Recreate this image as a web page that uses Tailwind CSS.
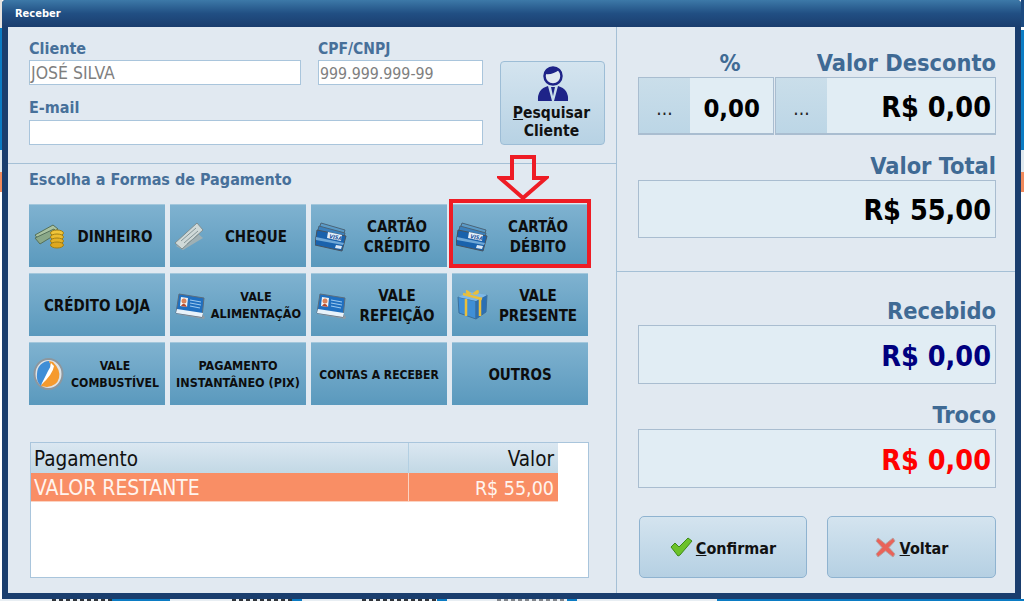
<!DOCTYPE html>
<html lang="en">
<head>
    <meta charset="UTF-8">
    <title>Receber</title>
    <script src="https://cdn.jsdelivr.net/npm/@tailwindcss/browser@4"></script>
</head>
<body class="relative w-[1024px] h-[601px] overflow-hidden bg-white font-['DejaVu_Sans_Condensed','DejaVu_Sans',sans-serif]">
    <svg class="hidden">
        <symbol id="card" viewBox="0 0 32 30">
            <path d="M6 1 L30 8 L26 21 L2 13Z" fill="#5b9bc8" stroke="#4a6478"/>
            <path d="M4 4 L30 11 L26 24 L1 16Z" fill="#3a7fbc" stroke="#4a6478"/>
            <path d="M2 8 L31 14 L27 29 L0 23Z" fill="#1a62ac" stroke="#47535f"/>
            <path d="M1 15 L29 21 L28 23 L1 18Z" fill="#6fa8d8"/>
            <path d="M13 10 L27 13 L26 19 L12 16Z" fill="#e6f1fa"/>
            <text x="14" y="16" font-size="5.500" font-weight="700" font-style="italic" fill="#17509a" transform="rotate(11 14 16)">VISA</text>
            <path d="M21 23 L27 24 L26 27 L20 26Z" fill="#dbe8f4"/>
        </symbol>
        <symbol id="idcard" viewBox="0 0 30 28">
            <path d="M1 21 L29 26 L30 24 L28 22Z" fill="#8f9aa3"/>
            <path d="M4 1 L29 5 L27 24 L1 20Z" fill="#1f6fc0" stroke="#5b6d7d"/>
            <path d="M2 16 L28 20 L27 24 L1 20Z" fill="#e8f2fa"/>
            <path d="M6 4 L13 5 L12 14 L5 13Z" fill="#f4f4f4"/>
            <circle cx="9" cy="8" r="2.500" fill="#d9825a"/>
            <path d="M6 13 Q9 8 12 14Z" fill="#b5482e"/>
            <path d="M15 7 L26 9 M15 10 L26 12 M15 13 L25 15" stroke="#9cc8ee" stroke-width="1.200"/>
        </symbol>
    </svg>

    <!-- janelas atras -->
    <div class="absolute left-0 top-0 w-[2px] h-[28px] bg-[#e8e4e0]"></div>
    <div class="absolute left-0 top-[28px] w-[2px] h-[122px] bg-[#0b7cc4]"></div>
    <div class="absolute left-0 top-[150px] w-[2px] h-[22px] bg-[#dfe8ee]"></div>
    <div class="absolute left-0 top-[172px] w-[2px] h-[20px] bg-[#f08a5c]"></div>
    <div class="absolute right-0 top-0 w-[3px] h-[27px] bg-[#1c4a80]"></div>
    <div class="absolute right-0 top-[30px] w-[3px] h-[120px] bg-[#0b7cc4]"></div>
    <div class="absolute right-0 top-[150px] w-[3px] h-[22px] bg-[#dfe8ee]"></div>
    <div class="absolute right-0 top-[172px] w-[3px] h-[20px] bg-[#f08a5c]"></div>
    <div class="absolute left-0 right-0 bottom-0 h-[2px] flex">
        <div class="w-[52px] bg-[#e8eef3]"></div><div class="w-[60px] bg-[repeating-linear-gradient(90deg,#30343a_0_4px,#e8eef3_4px_7px)]"></div><div class="w-[58px] bg-[#0b7cc4]"></div>
        <div class="w-[62px] bg-[#e8eef3]"></div><div class="w-[60px] bg-[repeating-linear-gradient(90deg,#30343a_0_4px,#e8eef3_4px_7px)]"></div><div class="w-[10px] bg-[#0b7cc4]"></div>
        <div class="w-[60px] bg-[#e8eef3]"></div><div class="w-[75px] bg-[repeating-linear-gradient(90deg,#30343a_0_4px,#e8eef3_4px_7px)]"></div><div class="w-[10px] bg-[#0b7cc4]"></div>
        <div class="w-[50px] bg-[#e8eef3]"></div><div class="w-[70px] bg-[repeating-linear-gradient(90deg,#80848a_0_4px,#e8eef3_4px_7px)]"></div><div class="w-[10px] bg-[#0b7cc4]"></div>
        <div class="w-[140px] bg-[#e8eef3]"></div><div class="w-[10px] bg-[#0b7cc4]"></div>
        <div class="flex-1 bg-[#0b7cc4]"></div>
    </div>

    <div class="absolute left-[2px] top-0 w-[1019px] h-[599px] flex flex-col rounded-t-[4px] bg-[#1a3e6e] px-[6px] pb-[6px]">
        <div class="-mx-[6px] h-[27px] shrink-0 rounded-t-[4px] bg-gradient-to-b from-[#3d79a8] via-[#214f83] to-[#1a3d6e] pl-[13px] pt-[7px] text-[11px] leading-[14px] font-bold text-white">Receber</div>

        <div class="flex-1 flex bg-[#e1e9f1]">
            <!-- esquerda -->
            <div class="w-[609px] shrink-0 flex flex-col border-r border-[#a5c0d6]">
                <div class="h-[137px] shrink-0 flex border-b border-[#a5c0d6] pl-[21px] pt-[12px]">
                    <div class="w-[454px] flex flex-col">
                        <div class="flex gap-[17px]">
                            <div class="w-[272px]">
                                <div class="mb-[2px] text-[16px] leading-[19px] font-bold text-[#47709a]">Cliente</div>
                                <div class="h-[25px] bg-white border border-[#a9c5dc] pl-[1px] text-[17.5px] leading-[25px] text-[#7f7f7f]">JOSÉ SILVA</div>
                            </div>
                            <div class="w-[165px]">
                                <div class="text-[15.5px] leading-[21px] font-bold text-[#47709a]">CPF/CNPJ</div>
                                <div class="h-[25px] bg-white border border-[#a9c5dc] pl-[1px] text-[15.8px] leading-[25px] text-[#7f7f7f]">999.999.999-99</div>
                            </div>
                        </div>
                        <div class="mt-[10px] text-[16px] leading-[25px] mb-0 font-bold text-[#47709a]">E-mail</div>
                        <div class="h-[25px] bg-white border border-[#a9c5dc]"></div>
                    </div>
                    <button class="ml-[17px] mt-[22px] w-[105px] h-[84px] rounded-[4px] border border-[#9dbdd6] bg-gradient-to-b from-[#d4e4ef] to-[#b7d2e4] flex flex-col items-center text-[15.5px] leading-[18px] font-bold text-[#111]">
                        <svg class="mt-[3px] w-[32px] h-[37px]" viewBox="0 0 32 37">
                            <circle cx="16" cy="11" r="8.500" fill="#e1e9f1" stroke="#1e2388" stroke-width="2.500"/>
                            <path d="M8 9 Q16 10 22 5 Q25 8 24.500 11 Q26 3 16 2 Q6 3 8 11Z" fill="#1e2388"/>
                            <path d="M1 36 Q0 24 11 21 L15 36Z M31 36 Q32 24 21 21 L17 36Z" fill="#1e2388"/>
                            <path d="M14 22 L18 22 L16 31Z" fill="#1e2388"/>
                        </svg>
                        <span class="mt-[2px] -ml-[2px]"><u>P</u>esquisar<br>Cliente</span>
                    </button>
                </div>

                <div class="relative flex-1 pl-[21px]">
                    <div class="pt-[6px] text-[16px] leading-[20px] font-bold text-[#47709a]">Escolha a Formas de Pagamento</div>

                    <div class="mt-[14px] grid grid-cols-[repeat(4,136px)] grid-rows-[repeat(3,63px)] gap-x-[5px] gap-y-[6px] font-bold text-[#0d0d0d] text-center">
                        <button class="relative pl-[36px] pt-[2px] bg-gradient-to-b from-[#7fb2d0] to-[#5a99bd] border-t border-[#a3c7dc] text-[15px] leading-[20px] font-bold">
                            <svg class="absolute left-[5px] top-[19px] w-[30px] h-[25px]" viewBox="0 0 30 25">
                                <path d="M1 11 L19 1 L24 5 L6 17Z" fill="#a9c2a0" stroke="#55705a"/>
                                <path d="M1 14 L20 5 L24 9 L6 20Z" fill="#8aa888" stroke="#55705a"/>
                                <ellipse cx="23" cy="9" rx="6.500" ry="3" fill="#f0c53a" stroke="#a27f16"/>
                                <ellipse cx="23" cy="13" rx="6.500" ry="3" fill="#ecbc2f" stroke="#a27f16"/>
                                <ellipse cx="23" cy="17" rx="6.500" ry="3" fill="#e6b327" stroke="#a27f16"/>
                                <ellipse cx="23" cy="21" rx="6.500" ry="3" fill="#dfa81f" stroke="#a27f16"/>
                            </svg>
                            DINHEIRO
                        </button>
                        <button class="relative pl-[36px] pt-[2px] bg-gradient-to-b from-[#7fb2d0] to-[#5a99bd] border-t border-[#a3c7dc] text-[15px] leading-[20px] font-bold">
                            <svg class="absolute left-[4px] top-[17px] w-[30px] h-[29px]" viewBox="0 0 30 29">
                                <path d="M2 24 L22 10 L29 16 L9 28Z" fill="#9fb0b4"/>
                                <path d="M1 21 L23 1 L29 8 L8 27Z" fill="#cfd9d8" stroke="#7f8f92"/>
                                <path d="M7 19 L22 6 M10 21 L24 9 M13 22 L25 12" stroke="#869698"/>
                            </svg>
                            CHEQUE
                        </button>
                        <button class="relative pl-[36px] pt-[2px] bg-gradient-to-b from-[#7fb2d0] to-[#5a99bd] border-t border-[#a3c7dc] text-[15px] leading-[20px] font-bold">
                            <svg class="absolute left-[4px] top-[17px] w-[32px] h-[30px]"><use href="#card"/></svg>
                            CARTÃO<br>CRÉDITO
                        </button>
                        <button class="relative pl-[36px] pt-[2px] bg-gradient-to-b from-[#7fb2d0] to-[#5a99bd] border-t border-[#a3c7dc] text-[15px] leading-[20px] font-bold">
                            <svg class="absolute left-[4px] top-[17px] w-[32px] h-[30px]"><use href="#card"/></svg>
                            CARTÃO<br>DÉBITO
                        </button>

                        <button class="pt-[2px] bg-gradient-to-b from-[#7fb2d0] to-[#5a99bd] border-t border-[#a3c7dc] text-[15px] leading-[20px] font-bold">CRÉDITO LOJA</button>
                        <button class="relative pl-[36px] bg-gradient-to-b from-[#7fb2d0] to-[#5a99bd] border-t border-[#a3c7dc] text-[12.5px] leading-[17px] font-bold">
                            <svg class="absolute left-[5px] top-[19px] w-[30px] h-[28px]"><use href="#idcard"/></svg>
                            VALE<br>ALIMENTAÇÃO
                        </button>
                        <button class="relative pl-[36px] pt-[2px] bg-gradient-to-b from-[#7fb2d0] to-[#5a99bd] border-t border-[#a3c7dc] text-[15px] leading-[20px] font-bold">
                            <svg class="absolute left-[5px] top-[19px] w-[30px] h-[28px]"><use href="#idcard"/></svg>
                            VALE<br>REFEIÇÃO
                        </button>
                        <button class="relative pl-[36px] pt-[2px] bg-gradient-to-b from-[#7fb2d0] to-[#5a99bd] border-t border-[#a3c7dc] text-[15px] leading-[20px] font-bold">
                            <svg class="absolute left-[4px] top-[14px] w-[32px] h-[32px]" viewBox="0 0 32 32">
                                <path d="M2 9 L20 13 L20 31 L3 25Z" fill="#3f8fd6" stroke="#3a6f9c"/>
                                <path d="M20 13 L31 7 L30 24 L20 31Z" fill="#2a6fb4" stroke="#3a6f9c"/>
                                <path d="M2 9 L14 4 L31 7 L20 13Z" fill="#7db8e8"/>
                                <path d="M10 11 L10 28 M24 10 L24 28 M7 6 L26 11" stroke="#e9bf3c" stroke-width="2.500" fill="none"/>
                                <path d="M16 6 Q9 -1 10 4 Q10 8 16 6 Q23 -1 23 4 Q22 8 16 6Z" fill="#e9bf3c"/>
                            </svg>
                            VALE<br>PRESENTE
                        </button>

                        <button class="relative pl-[36px] pt-[2px] bg-gradient-to-b from-[#7fb2d0] to-[#5a99bd] border-t border-[#a3c7dc] text-[12.2px] leading-[17px] font-bold">
                            <svg class="absolute left-[4px] top-[15px] w-[31px] h-[32px]" viewBox="0 0 31 32">
                                <ellipse cx="15.500" cy="16" rx="14" ry="15" fill="#dfe3e6" stroke="#8d979e" stroke-width="2"/>
                                <path d="M4 16 A12 13 0 0 1 16 3 Q20 10 14 17 L8 28 A12 13 0 0 1 4 16Z" fill="#3f8ed6"/>
                                <path d="M14 17 Q20 10 16 3 L20 4 Q28 12 26 20 Q24 28 14 29 L8 28Z" fill="#f59a2e"/>
                                <path d="M8 27 L15 13 Q18 9 18 5 L21 8 Q20 16 8 27Z" fill="#fff"/>
                            </svg>
                            VALE<br>COMBUSTÍVEL
                        </button>
                        <button class="bg-gradient-to-b from-[#7fb2d0] to-[#5a99bd] border-t border-[#a3c7dc] text-[12.5px] leading-[17px] font-bold">PAGAMENTO<br>INSTANTÂNEO (PIX)</button>
                        <button class="pt-[2px] bg-gradient-to-b from-[#7fb2d0] to-[#5a99bd] border-t border-[#a3c7dc] text-[12px] leading-[17px] font-bold">CONTAS A RECEBER</button>
                        <button class="pt-[2px] bg-gradient-to-b from-[#7fb2d0] to-[#5a99bd] border-t border-[#a3c7dc] text-[15px] leading-[20px] font-bold">OUTROS</button>
                    </div>

                    <!-- destaque vermelho por cima do botao -->
                    <div class="absolute left-[441px] top-[35px] w-[142px] h-[69px] border-[4px] border-[#ee1c25]"></div>
                    <svg class="absolute left-[489px] top-[-9px] w-[52px] h-[45px]" viewBox="0 0 52 45">
                        <path d="M15 2 L37 2 L37 23 L49 23 L26 43 L3 23 L15 23Z" fill="none" stroke="#ee1c25" stroke-width="4"/>
                    </svg>

                    <div class="mt-[37px] ml-[1px] w-[559px] h-[136px] bg-white border border-[#a9c5dc]">
                        <div class="w-[527px] h-[30px] flex bg-gradient-to-b from-[#dbe7f1] to-[#c2d8e5] text-[20.5px] leading-[32px] text-[#111]">
                            <div class="w-[378px] pl-[3px] border-r border-[#b3cfe2]">Pagamento</div>
                            <div class="flex-1 pr-[4px] text-right">Valor</div>
                        </div>
                        <div class="w-[527px] h-[29px] flex bg-[#f98e65] leading-[31px] text-[#fff4ee] border-b border-[#fbd3c2]">
                            <div class="w-[378px] pl-[3px] border-r border-[#fbd3c2] text-[21px]">VALOR RESTANTE</div>
                            <div class="flex-1 pr-[4px] text-right text-[19.5px]">R$ 55,00</div>
                        </div>
                    </div>
                </div>
            </div>

            <!-- direita -->
            <div class="flex-1 flex flex-col">
                <div class="h-[245px] shrink-0 border-b border-[#a5c0d6] pl-[21px] pr-[19px] pt-[21px]">
                    <div class="flex h-[29px] text-[23.4px] leading-[31px] font-bold text-[#3f6a94]">
                        <div class="w-[136px] pl-[48px] text-center">%</div>
                        <div class="flex-1 text-right">Valor Desconto</div>
                    </div>
                    <div class="flex gap-[1px]">
                        <div class="w-[136px] h-[58px] flex border border-[#a9bdd0] border-b-2 bg-[#e1edf4]">
                            <div class="w-[51px] bg-gradient-to-b from-[#cadeea] to-[#bcd6e6] flex items-center justify-center text-[19px] pt-[6px] text-[#222]">...</div>
                            <div class="flex-1 pr-[13px] text-right text-[25.5px] leading-[60px] font-bold text-black">0,00</div>
                        </div>
                        <div class="flex-1 h-[58px] flex border border-[#a9bdd0] border-b-2 bg-[#e1edf4]">
                            <div class="w-[51px] bg-gradient-to-b from-[#cadeea] to-[#bcd6e6] flex items-center justify-center text-[19px] pt-[6px] text-[#222]">...</div>
                            <div class="flex-1 pr-[4px] text-right text-[28.5px] leading-[60px] font-bold text-black">R$ 0,00</div>
                        </div>
                    </div>
                    <div class="mt-[18px] text-right text-[23.4px] leading-[27px] font-bold text-[#3f6a94]">Valor Total</div>
                    <div class="h-[58px] bg-[#e1edf4] border border-[#a9bdd0] pr-[4px] text-right text-[28.5px] leading-[60px] font-bold text-black">R$ 55,00</div>
                </div>
                <div class="flex-1 pl-[21px] pr-[19px] pt-[25px]">
                    <div class="text-right text-[23.4px] leading-[28px] font-bold text-[#3f6a94]">Recebido</div>
                    <div class="h-[59px] bg-[#e1edf4] border border-[#a9bdd0] pr-[4px] text-right text-[28.5px] leading-[62px] font-bold text-[#00007f]">R$ 0,00</div>
                    <div class="mt-[18px] text-right text-[23.4px] leading-[27px] font-bold text-[#3f6a94]">Troco</div>
                    <div class="h-[59px] bg-[#e1edf4] border border-[#a9bdd0] pr-[4px] text-right text-[28.5px] leading-[62px] font-bold text-[#ff0000]">R$ 0,00</div>
                    <div class="mt-[28px] flex justify-between pl-[1px]">
                        <button class="w-[168px] h-[62px] rounded-[5px] border border-[#8fb3d0] bg-gradient-to-b from-[#d4e4ef] to-[#b5d0e3] flex items-center justify-center gap-[3px] text-[16px] font-bold text-[#111]">
                            <svg class="w-[23px] h-[20px]" viewBox="0 0 23 20"><path d="M1 10 L5 6 L9 10 L18 1 L22 4 L10 18 L8 19Z" fill="#6cc22a" stroke="#3c8a16"/></svg>
                            <span class="pt-[3px]"><u>C</u>onfirmar</span>
                        </button>
                        <button class="w-[169px] h-[62px] rounded-[5px] border border-[#8fb3d0] bg-gradient-to-b from-[#d4e4ef] to-[#b5d0e3] flex items-center justify-center gap-[4px] text-[16px] font-bold text-[#111]">
                            <svg class="w-[21px] h-[21px]" viewBox="0 0 21 21"><path d="M3 1 L10.500 7 L18 1 L20 4 L14 10.500 L20 17 L18 20 L10.500 14 L3 20 L1 17 L7 10.500 L1 4Z" fill="#e9635a" stroke="#b9a0a0"/></svg>
                            <span class="pt-[3px]"><u>V</u>oltar</span>
                        </button>
                    </div>
                </div>
            </div>
        </div>
    </div>
</body>
</html>
